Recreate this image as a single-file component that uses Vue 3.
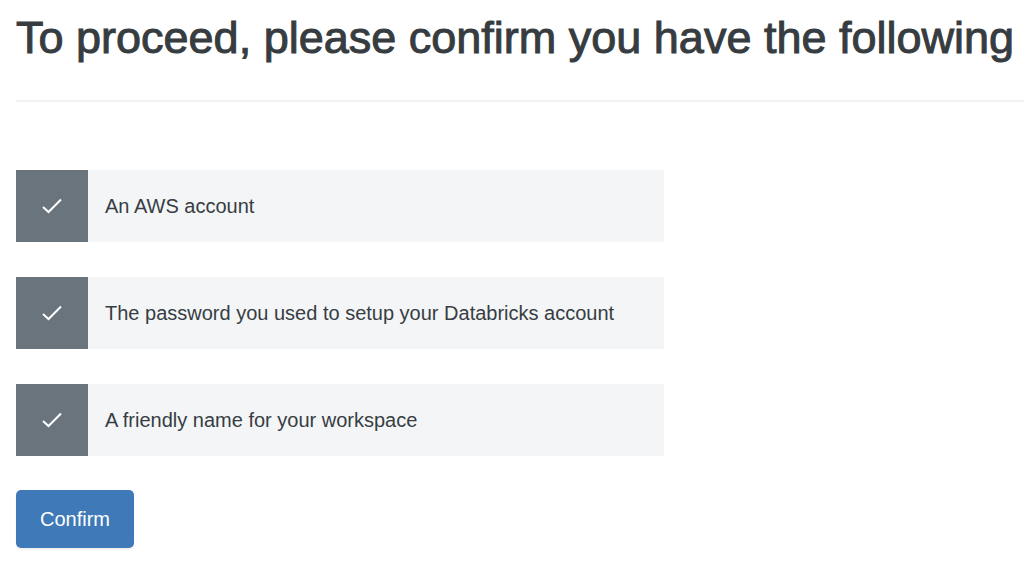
<script setup>
import { ref } from 'vue'

const items = ref([
  { id: 'aws', text: 'An AWS account', checked: true },
  { id: 'password', text: 'The password you used to setup your Databricks account', checked: true },
  { id: 'workspace', text: 'A friendly name for your workspace', checked: true },
])
</script>

<template>
  <main class="page">
    <h1 class="title">To proceed, please confirm you have the following</h1>
    <ul class="list">
      <li v-for="item in items" :key="item.id">
        <label class="item" :for="item.id">
          <span class="tick">
            <input :id="item.id" v-model="item.checked" class="box" type="checkbox" />
            <svg v-if="item.checked" class="icon" viewBox="0 0 20 16" aria-hidden="true">
              <path d="M1 9 L6.5 14 L19 1.5" />
            </svg>
          </span>
          <span class="label">{{ item.text }}</span>
        </label>
      </li>
    </ul>
    <button type="button" class="confirm">Confirm</button>
  </main>
</template>

<style>
body {
  background: #fff;
}
</style>

<style scoped>
.page {
  padding: 16px 0 16px 16px;
  font-family: "Liberation Sans", Arial, sans-serif;
  color: #373d43;
}
.title {
  margin: 0;
  padding-bottom: 40px;
  border-bottom: 2px solid #f2f2f3;
  font-size: 45px;
  line-height: 44px;
  font-weight: 400;
  color: #363c40;
  -webkit-text-stroke: 1px currentColor;
}
.list {
  list-style: none;
  margin: 68px 0 34px;
  padding: 0;
  display: flex;
  flex-direction: column;
  gap: 35px;
  max-width: 648px;
}
.item {
  display: flex;
  min-height: 72px;
  background: #f3f5f7;
}
.tick {
  position: relative;
  display: flex;
  flex: none;
  align-items: center;
  justify-content: center;
  width: 72px;
  background: #69747d;
}
.box {
  position: absolute;
  inset: 0;
  width: 100%;
  height: 100%;
  margin: 0;
  appearance: none;
}
.icon {
  position: relative;
  width: 20px;
  height: 16px;
  fill: none;
  stroke: #fff;
  stroke-width: 2;
  pointer-events: none;
}
.label {
  padding: 0 17px;
  align-self: center;
  font-size: 20px;
  line-height: 28px;
}
.confirm {
  display: block;
  padding: 16px 24px;
  border: 0;
  border-radius: 5px;
  background: #3f79b7;
  box-shadow: 0 2px 2px #f0f0f0;
  color: #fff;
  font-family: inherit;
  font-size: 20px;
  line-height: 26px;
}
</style>
